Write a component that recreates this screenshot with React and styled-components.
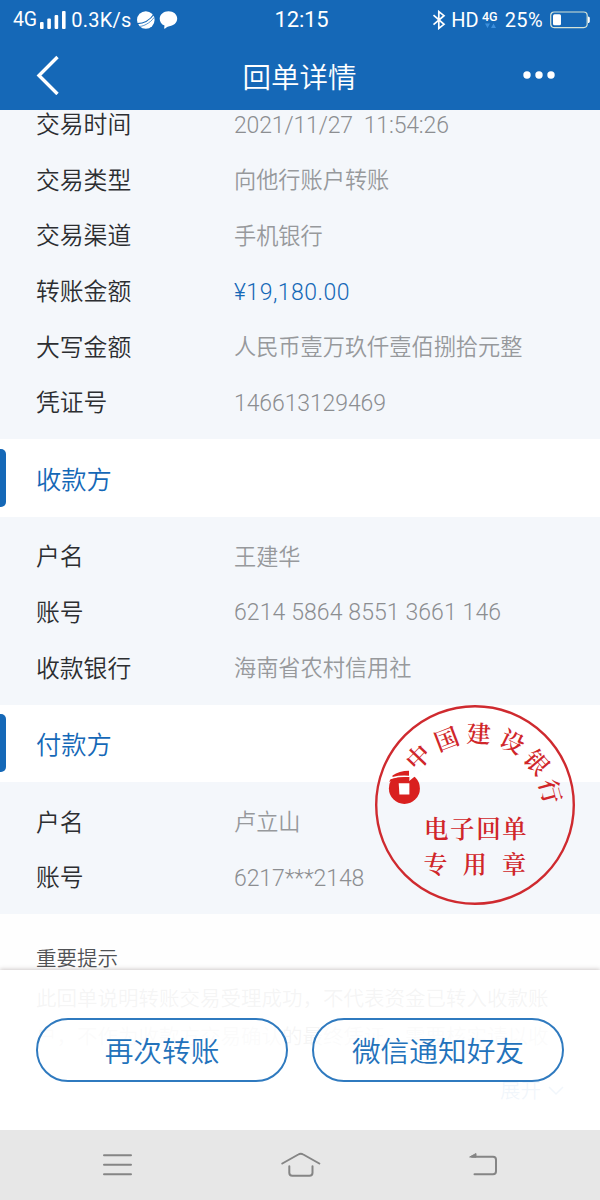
import React from "react";
import styled, { createGlobalStyle } from "styled-components";

const GlobalStyle = createGlobalStyle`
  * {
    box-sizing: border-box;
  }

  body {
    margin: 0;
    background: #fff;
    font-family: Roboto, "Noto Sans CJK SC", sans-serif;
    font-weight: 350;
  }
`;

const Screen = styled.div`
  position: relative;
  width: 600px;
  height: 1200px;
  display: flex;
  flex-direction: column;
  overflow: hidden;
  background: #fefefe;
`;

const TopBar = styled.header`
  flex: none;
  height: 110px;
  background: #1568b7;
  color: #fff;
  z-index: 1;
`;

const StatusBar = styled.div`
  display: grid;
  grid-template-columns: 1fr auto 1fr;
  align-items: center;
  height: 40px;
  padding: 0 10px 0 13px;
  font-size: 20px;
  font-weight: 400;
  line-height: 40px;
`;

const StatusGroup = styled.div`
  display: flex;
  align-items: center;
  justify-content: ${(props) => (props.$end ? "flex-end" : "flex-start")};
  height: 40px;

  svg {
    flex: none;
    display: block;
  }
`;

const StatusText = styled.span`
  font-size: ${(props) => props.$size || 20}px;
  letter-spacing: ${(props) => props.$spacing || 0}px;
  margin: 0 ${(props) => props.$right || 0}px 0 ${(props) => props.$left || 0}px;
`;

const Clock = styled.span`
  font-size: 22px;
  letter-spacing: -0.2px;
`;

const TitleBar = styled.div`
  display: grid;
  grid-template-columns: 1fr auto 1fr;
  align-items: center;
  height: 70px;
  padding: 0 45px 0 35px;

  svg {
    display: block;
  }
`;

const Title = styled.h1`
  margin: 0 0 0 9px;
  padding-top: 7px;
  font-size: 28.5px;
  font-weight: 350;
  line-height: 63px;
`;

const More = styled.div`
  justify-self: end;
`;

const Content = styled.main`
  margin-top: -13.5px;
`;

const Details = styled.dl`
  margin: 0;
  padding: ${(props) => props.$top}px 37px 9.4px 36px;
  background: #f4f7fb;
`;

const Row = styled.div`
  display: flex;
  align-items: center;
  height: 55.6px;
`;

const Label = styled.dt`
  width: 198px;
  padding-bottom: 3px;
  font-size: 23.8px;
  color: #2c2e31;
`;

const Value = styled.dd`
  margin: 0;
  padding-bottom: ${(props) => (props.$latin ? 0 : 3)}px;
  padding-top: ${(props) => (props.$latin ? 2 : 0)}px;
  font-size: ${(props) => (props.$latin ? 23 : 22.2)}px;
  font-weight: ${(props) => (props.$latin ? 300 : 350)};
  letter-spacing: ${(props) => props.$spacing || 0}px;
  color: ${(props) => (props.$accent ? "#1568b7" : props.$latin ? "#8c8e91" : "#97999c")};
  white-space: pre;
`;

const SectionHead = styled.h2`
  display: flex;
  align-items: center;
  height: 77.6px;
  margin: 0;
  padding-bottom: 1px;
  background: #fff;
  color: #1568b7;
  font-size: 25.3px;
  font-weight: 350;

  &::before {
    content: "";
    width: 6px;
    height: 58px;
    margin-right: 30px;
    border-radius: 0 5px 5px 0;
    background: #1568b7;
  }
`;

const Notice = styled.section`
  padding: 26px 36px 0;
  color: #505255;
  font-size: 20.5px;
`;

const NoticeTitle = styled.h3`
  margin: 0;
  font-size: inherit;
  font-weight: 350;
  line-height: 38px;
`;

const NoticeText = styled.p`
  margin: 2px 0 0;
  line-height: 38px;
  white-space: pre;
`;

const Expand = styled.div`
  display: flex;
  align-items: center;
  justify-content: flex-end;
  gap: 7px;
  margin-top: 16px;
  color: #1568b7;
  line-height: 38px;
`;

const ActionPanel = styled.div`
  position: absolute;
  left: 0;
  right: 0;
  bottom: 70px;
  display: flex;
  gap: 24px;
  height: 160px;
  padding: 48px 36px;
  background: rgba(255, 255, 255, 0.94);
  box-shadow: 0 -1px 4px rgba(70, 50, 50, 0.25);
`;

const ActionButton = styled.button`
  flex: 1;
  height: 64px;
  padding: 0 0 2px;
  border: 2px solid #2f7abf;
  border-radius: 32px;
  background: rgba(255, 255, 255, 0.6);
  color: #2372bb;
  font-family: inherit;
  font-size: 28.7px;
  font-weight: 350;
`;

const SystemNav = styled.nav`
  position: absolute;
  left: 0;
  right: 0;
  bottom: 0;
  display: flex;
  justify-content: space-between;
  align-items: center;
  height: 70px;
  padding: 0 101px;
  background: #e7e7e7;

  svg {
    display: block;
  }
`;

const Stamp = styled.svg`
  position: absolute;
  left: 373px;
  top: 703px;
  font-family: "Noto Serif CJK SC", "Noto Sans CJK SC", serif;
  font-weight: 600;
`;

const transaction = [
  { label: "交易时间", value: "2021/11/27  11:54:26", latin: true, spacing: -0.15 },
  { label: "交易类型", value: "向他行账户转账" },
  { label: "交易渠道", value: "手机银行" },
  { label: "转账金额", value: "¥19,180.00", latin: true, accent: true, spacing: 0.5 },
  { label: "大写金额", value: "人民币壹万玖仟壹佰捌拾元整" },
  { label: "凭证号", value: "146613129469", latin: true, spacing: -0.1 },
];

const payee = [
  { label: "户名", value: "王建华" },
  { label: "账号", value: "6214 5864 8551 3661 146", latin: true, spacing: 0.1 },
  { label: "收款银行", value: "海南省农村信用社" },
];

const payer = [
  { label: "户名", value: "卢立山" },
  { label: "账号", value: "6217***2148", latin: true, spacing: -0.1 },
];

const arc = [
  { char: "中", x: 418, y: 757, angle: -46 },
  { char: "国", x: 446.5, y: 739, angle: -21 },
  { char: "建", x: 478.7, y: 733.7, angle: 3 },
  { char: "设", x: 512.3, y: 741.7, angle: 26 },
  { char: "银", x: 536.8, y: 762.3, angle: 49 },
  { char: "行", x: 550.5, y: 791.3, angle: 75 },
];

const DetailList = ({ items, top }) => (
  <Details $top={top}>
    {items.map((item) => (
      <Row key={item.label}>
        <Label>{item.label}</Label>
        <Value $latin={item.latin} $accent={item.accent} $spacing={item.spacing}>
          {item.value}
        </Value>
      </Row>
    ))}
  </Details>
);

const SignalIcon = () => (
  <svg width="26" height="20" viewBox="0 0 26 20" fill="#fff">
    <rect x="0" y="12" width="3.6" height="7" rx="1" />
    <rect x="7.3" y="8.5" width="3.6" height="10.5" rx="1" />
    <rect x="14.6" y="5" width="3.6" height="14" rx="1" />
    <rect x="22" y="1" width="3.6" height="18" rx="1" />
  </svg>
);

const PlanetIcon = () => (
  <svg width="20" height="20" viewBox="0 0 20 20">
    <circle cx="9.8" cy="10" r="8.8" fill="#fff" />
    <path d="M0 13.6C7 14 14 10 18.5 3.5" fill="none" stroke="#1568b7" strokeWidth="1.1" />
    <path d="M1.5 16.2C6 17.500 14.500 13 18 7.500" fill="none" stroke="#1568b7" strokeWidth=".7" />
  </svg>
);

const ChatIcon = () => (
  <svg width="19" height="20" viewBox="0 0 19 20" fill="#fff">
    <path d="M9.5 1.2c5 0 8.7 3.2 8.7 7.4s-3.7 7.6-8.7 7.8c-1 0-1.8.8-3.4 2.2-.5.4-1 .1-.9-.5l.3-2.5C2.3 14.2.7 11.6.7 8.7.7 4.500 4.500 1.200 9.500 1.200Z" />
  </svg>
);

const BluetoothIcon = () => (
  <svg width="14" height="20" viewBox="0 0 14 20" fill="none" stroke="#fff" strokeWidth="1.7">
    <path d="M1.5 5.2 12 14.3 6.8 18.4V1.6L12 5.7 1.5 14.600" />
  </svg>
);

const DataIcon = () => (
  <svg width="17" height="24" viewBox="0 0 17 24">
    <text x="0" y="12.5" fontSize="12.500" fontWeight="500" fill="#fff">4G</text>
    <path d="M3 15.500h5L5.500 20Z M9 20h5l-2.500-4.500Z" fill="#3d8fdc" />
  </svg>
);

const BatteryIcon = () => (
  <svg width="40" height="18" viewBox="0 0 40 18">
    <rect x=".7" y="1" width="36.5" height="15.6" rx="3.5" fill="none" stroke="#d5e3d6" strokeWidth="1.2" />
    <rect x="3" y="3.3" width="8" height="11" rx="1.5" fill="#fff" />
    <path d="M38 5.500c1.300 0 1.800.8 1.800 1.800v3c0 1-.5 1.800-1.800 1.800Z" fill="#fff" />
  </svg>
);

const BankStamp = () => (
  <Stamp width="204" height="204" viewBox="373 703 204 204" fill="#d0262a">
    <circle cx="475" cy="805" r="98.8" fill="none" stroke="#cf2a2f" strokeWidth="2.4" />
    {arc.map(({ char, x, y, angle }) => (
      <text
        key={char}
        x="0"
        y="9"
        fontSize="24"
        textAnchor="middle"
        transform={`translate(${x} ${y}) rotate(${angle})`}
      >
        {char}
      </text>
    ))}
    <circle cx="404.4" cy="788.4" r="15.5" fill="#d9201f" />
    <path d="M388 770h34l-8.500 7.500-4.300 3.500V777q-10-.5-19.500 2.500Z" fill="#fdfdfe" />
    <path d="M392.500 775.500q6.500-4.500 16.500-4.700v5q-9-.7-16.500 1.200Z" fill="#d9201f" />
    <path d="M390.500 779.300q8-2.700 18.700-2.200v2.700q-10-.4-20 2Z" fill="#d9201f" />
    <path d="M398.700 783.200h10.700v11.300h-10Z" fill="#fff" />
    <text x="424" y="837.5" fontSize="24.5" letterSpacing="1.6">电子回单</text>
    <text x="423.5" y="872.5" fontSize="24" letterSpacing="15.3">专用章</text>
  </Stamp>
);

export default function App() {
  return (
    <Screen>
      <GlobalStyle />

      <TopBar>
        <StatusBar>
          <StatusGroup>
            <StatusText $size={19.5} $right={3.5} $spacing={-0.2}>4G</StatusText>
            <SignalIcon />
            <StatusText $left={5} $right={5} $spacing={0.2}>0.3K/s</StatusText>
            <PlanetIcon />
            <svg width="3" height="20" />
            <ChatIcon />
          </StatusGroup>
          <Clock>12:15</Clock>
          <StatusGroup $end>
            <BluetoothIcon />
            <StatusText $left={5} $right={3}>HD</StatusText>
            <DataIcon />
            <StatusText $left={6} $right={7} $spacing={0.4}>25%</StatusText>
            <BatteryIcon />
          </StatusGroup>
        </StatusBar>

        <TitleBar>
          <svg width="25" height="40" viewBox="0 0 25 40" fill="none" stroke="#fff" strokeWidth="3.4">
            <path d="M22.5 2 4 20.5 22.500 39" />
          </svg>
          <Title>回单详情</Title>
          <More>
            <svg width="32" height="8" viewBox="0 0 32 8" fill="#fff">
              <circle cx="4" cy="4" r="3.7" />
              <circle cx="16" cy="4" r="3.7" />
              <circle cx="28" cy="4" r="3.7" />
            </svg>
          </More>
        </TitleBar>
      </TopBar>

      <Content>
        <DetailList items={transaction} top={0} />
        <SectionHead>收款方</SectionHead>
        <DetailList items={payee} top={11.5} />
        <SectionHead>付款方</SectionHead>
        <DetailList items={payer} top={11.5} />

        <Notice>
          <NoticeTitle>重要提示</NoticeTitle>
          <NoticeText>
            {"此回单说明转账交易受理成功，不代表资金已转入收款账\n户，不作为收款方交易确认的最终凭证，需要核实请以收"}
          </NoticeText>
          <Expand>
            展开
            <svg width="16" height="10" viewBox="0 0 16 10" fill="none" stroke="#1568b7" strokeWidth="1.5">
              <path d="m1 1 7 7 7-7" />
            </svg>
          </Expand>
        </Notice>
      </Content>

      <BankStamp />

      <ActionPanel>
        <ActionButton>再次转账</ActionButton>
        <ActionButton>微信通知好友</ActionButton>
      </ActionPanel>

      <SystemNav>
        <svg width="32" height="28" viewBox="0 0 32 28" fill="none" stroke="#858585" strokeWidth="2" strokeLinecap="round">
          <path d="M3 4.3h27M3 13.8h27M3 23.3h27" />
        </svg>
        <svg width="40" height="28" viewBox="0 0 40 28" fill="none" stroke="#858585" strokeWidth="2" strokeLinecap="round">
          <path d="m1.300 12.500 16-9q2.500-1.500 5 0l16 9" />
          <path d="M8.300 15.300v6.500q0 3 3 3h17.200q3 0 3-3v-6.500" />
        </svg>
        <svg width="30" height="28" viewBox="0 0 30 28" fill="none" stroke="#858585" strokeWidth="2" strokeLinecap="round">
          <path d="M3 5.800h21q3 0 3 3v11.500q0 3-3 3H5.500" />
          <path d="M1 5.800 7 2.500v3.300Z" fill="#858585" strokeWidth="1" />
        </svg>
      </SystemNav>
    </Screen>
  );
}
